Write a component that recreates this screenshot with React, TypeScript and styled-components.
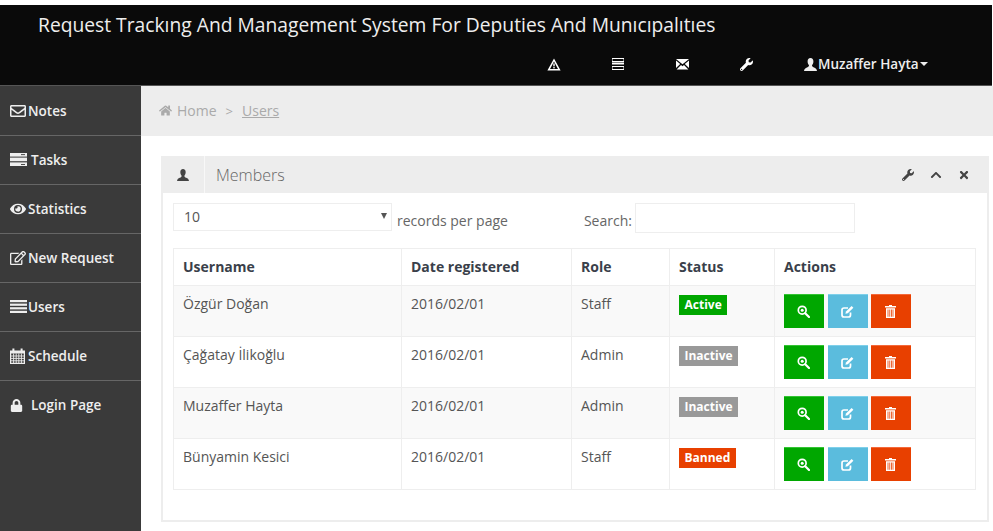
import React from "react";
import styled, { createGlobalStyle } from "styled-components";
import { FaChevronUp, FaEye, FaHome, FaLock, FaRegEdit, FaRegEnvelope, FaTimes, FaWrench } from "react-icons/fa";

const GlobalStyle = createGlobalStyle`
  html, body {
    margin: 0;
    padding: 0;
    background: #fff;
  }
  body {
    font-family: "Open Sans", "Liberation Sans", sans-serif;
    font-size: 14px;
    color: #555;
  }
`;

const Page = styled.div`
  width: 993px;
  height: 531px;
  padding-top: 5px;
  box-sizing: border-box;
  overflow: hidden;
`;

const Header = styled.header`
  width: 992px;
  height: 81px;
  box-sizing: border-box;
  background: #0a0a0a;
  border-bottom: 1px solid #555;
  color: #eee;
`;

const Title = styled.h1`
  margin: 0;
  padding: 6px 0 0 38px;
  font-size: 19.25px;
  font-weight: 400;
  line-height: 27px;
  color: #eee;
`;

const TopNav = styled.nav`
  display: flex;
  align-items: center;
  height: 20px;
  margin-top: 16px;
  padding-left: 522px;
`;

const TopNavIcon = styled.span`
  display: flex;
  justify-content: center;
  width: 64px;
  color: #fff;
  font-size: 13px;
`;

const UserMenu = styled.span`
  display: flex;
  align-items: center;
  margin-left: 26px;
  color: #eee;
  font-size: 13.5px;
  font-weight: 600;
  gap: 1px;
`;

const Caret = styled.i`
  width: 0;
  height: 0;
  border-left: 4px solid transparent;
  border-right: 4px solid transparent;
  border-top: 4px solid #eee;
`;

const Shell = styled.div`
  display: grid;
  grid-template-columns: 141px 1fr;
  height: 445px;
`;

const Sidebar = styled.aside`
  background: #3a3a3a;
`;

const SideItem = styled.a`
  display: flex;
  align-items: center;
  height: 49px;
  padding: 0 0 1px 10px;
  box-sizing: border-box;
  border-bottom: 1px solid #666;
  color: #eee;
  font-size: 13.5px;
  font-weight: 600;

  &:first-child {
    height: 50px;
    padding-bottom: 0;
  }

  &:last-child {
    padding-bottom: 1px;
    border-bottom: 0;
  }
`;

const SideIcon = styled.span<{ $wide?: boolean }>`
  display: flex;
  width: ${(p) => (p.$wide ? "21px" : "18px")};
  font-size: 16px;
  color: #eee;
`;

const Content = styled.main`
  min-width: 0;
`;

const Breadcrumb = styled.div`
  display: flex;
  align-items: center;
  height: 50px;
  padding: 0 0 1px 18px;
  box-sizing: border-box;
  background: #ededed;
  color: #aaa;
  font-size: 14px;
`;

const Crumb = styled.span`
  margin-left: 5px;
`;

const Separator = styled.span`
  margin: 0 9px;
  font-size: 13px;
`;

const CrumbLink = styled.a`
  color: #aaa;
  text-decoration: underline;
`;

const Panel = styled.section`
  width: 828px;
  height: 366px;
  margin: 20px 0 0 20px;
  box-sizing: border-box;
  border: 2px solid #ededed;
  border-top: 0;
`;

const PanelHead = styled.div`
  display: flex;
  align-items: center;
  height: 37px;
  margin: 0 -2px;
  background: #ededed;
`;

const PanelIcon = styled.span`
  display: flex;
  align-items: center;
  justify-content: center;
  width: 43px;
  height: 100%;
  border-right: 1px solid #f8f8f8;
  color: #444;
  font-size: 12px;
`;

const PanelTitle = styled.h2`
  margin: 0 0 0 11px;
  flex: 1;
  font-size: 16px;
  font-weight: 300;
  color: #666;
`;

const PanelTools = styled.div`
  display: flex;
  align-items: center;
  gap: 16px;
  padding-right: 19px;
  color: #444;
  font-size: 12px;
`;

const PanelBody = styled.div`
  padding: 10px 11px 0 10px;
`;

const Controls = styled.div`
  display: flex;
  align-items: flex-start;
  height: 45px;
`;

const SelectBox = styled.div`
  position: relative;
  width: 219px;
  height: 28px;
  padding-left: 10px;
  box-sizing: border-box;
  border: 1px solid #eee;
  line-height: 25px;
  color: #555;

  &::after {
    content: "";
    position: absolute;
    right: 4px;
    top: 9px;
    border-left: 3px solid transparent;
    border-right: 3px solid transparent;
    border-top: 6px solid #555;
  }
`;

const ControlLabel = styled.span<{ $gap: number }>`
  margin: 8px 0 0 ${(p) => p.$gap}px;
  line-height: 20px;
  color: #666;
`;

const SearchInput = styled.div`
  width: 220px;
  height: 30px;
  margin-left: 3px;
  box-sizing: border-box;
  border: 1px solid #eee;
`;

const Table = styled.table`
  width: 802px;
  table-layout: fixed;
  border-collapse: collapse;
  border: 1px solid #eee;
  font-size: 14px;
`;

const Th = styled.th<{ $width: number }>`
  width: ${(p) => p.$width}px;
  height: 37px;
  padding: 0 9px 2px;
  box-sizing: border-box;
  border: 1px solid #eee;
  text-align: left;
  font-weight: 700;
  color: #3a3f4a;
`;

const Row = styled.tr<{ $odd: boolean }>`
  background: ${(p) => (p.$odd ? "#f9f9f9" : "#fff")};
`;

const Td = styled.td`
  height: 51px;
  padding: 8px 9px 0;
  box-sizing: border-box;
  border: 1px solid #eee;
  vertical-align: top;
  line-height: 20px;
  color: #555;
`;

const ActionCell = styled(Td)`
  padding-top: 8px;
  white-space: nowrap;
`;

const statusColors = {
  Active: "#00a700",
  Inactive: "#999",
  Banned: "#e84000",
};

const Badge = styled.span<{ $status: keyof typeof statusColors }>`
  display: inline-block;
  height: 20px;
  margin-top: 1px;
  padding: 0 5.5px;
  background: ${(p) => statusColors[p.$status]};
  color: #fff;
  font-size: 12px;
  font-weight: 700;
  line-height: 19px;
  vertical-align: top;
`;

const ActionButton = styled.button<{ $color: string; $light: string; $gap: number }>`
  display: inline-flex;
  align-items: center;
  justify-content: center;
  width: 40px;
  height: 34px;
  margin: 0 ${(p) => p.$gap}px 0 0;
  padding: 0 2px 0 0;
  border: 0;
  border-top: 1px solid ${(p) => p.$light};
  background: ${(p) => p.$color};
  color: #fff;
  vertical-align: top;
`;

// old bootstrap style glyphs that the icon packs do not carry
const WarningIcon = () => (
  <svg width="14" height="13" viewBox="0 0 14 13">
    <path fillRule="evenodd" fill="currentColor" d="M7 0.5 13.6 12.5H0.4ZM7 3.6 3 11H11Z" />
    <rect x="6.3" y="5.4" width="1.4" height="3" fill="currentColor" />
    <rect x="6.3" y="9" width="1.4" height="1.4" fill="currentColor" />
  </svg>
);

const StackIcon = () => (
  <svg width="12" height="12" viewBox="0 0 12 12">
    <rect y="0.5" width="12" height="3" fill="none" stroke="currentColor" />
    <rect y="4.5" width="12" height="2" fill="currentColor" />
    <rect y="8.5" width="12" height="3" fill="none" stroke="currentColor" />
  </svg>
);

const MailCrossIcon = () => (
  <svg width="13" height="11" viewBox="0 0 13 11">
    <path
      fill="currentColor"
      d="M0 0H13L6.5 5.2ZM0 1.6 4.2 5 0 9ZM13 1.6 8.8 5 13 9ZM0.6 10.6 5 6.1 6.5 7.2 8 6.1 12.4 10.6Z"
    />
  </svg>
);

const UserIcon = ({ size = 13 }: { size?: number }) => (
  <svg width={size} height={size} viewBox="0 0 13 13">
    <path
      fill="currentColor"
      d="M6.5 0C8.4 0 9.4 1.4 9.4 3.4 9.4 5 8.7 6.4 8 7.2 8 8.4 8.6 8.9 10 9.5 11.6 10.2 12.6 10.8 13 13H0C.4 10.8 1.4 10.2 3 9.5 4.4 8.9 5 8.4 5 7.2 4.3 6.4 3.6 5 3.6 3.4 3.6 1.4 4.6 0 6.5 0Z"
    />
  </svg>
);

const TasksIcon = () => (
  <svg width="17" height="13" viewBox="0 0 17 13">
    <rect width="17" height="3.6" fill="currentColor" />
    <rect y="4.6" width="17" height="3.6" fill="currentColor" />
    <rect y="9.4" width="17" height="3.6" fill="currentColor" />
    <rect x="11" y="11" width="4" height="0.9" fill="#3a3a3a" />
    <rect x="11" y="1.2" width="4" height="0.9" fill="#3a3a3a" />
  </svg>
);

const ListIcon = () => (
  <svg width="17" height="13" viewBox="0 0 17 13">
    <rect width="17" height="2.2" fill="currentColor" />
    <rect y="3.6" width="17" height="2.2" fill="currentColor" />
    <rect y="7.2" width="17" height="2.2" fill="currentColor" />
    <rect y="10.8" width="17" height="2.2" fill="currentColor" />
  </svg>
);

const CalendarIcon = () => (
  <svg width="15" height="16" viewBox="0 0 15 16">
    <path
      fillRule="evenodd"
      fill="currentColor"
      d="M0 2.5H2.4V0.5H4.4V2.5H10.6V0.5H12.6V2.5H15V16H0ZM1.2 5.5V14.8H13.8V5.5Z"
    />
    <path
      stroke="currentColor"
      strokeWidth="0.9"
      d="M1 8H14M1 10.4H14M1 12.8H14M3.6 5.5V15M6.2 5.5V15M8.8 5.5V15M11.4 5.5V15"
    />
  </svg>
);

const ZoomIcon = () => (
  <svg width="13" height="13" viewBox="0 0 13 13">
    <circle cx="5.2" cy="5.2" r="3.9" fill="none" stroke="currentColor" strokeWidth="1.7" />
    <circle cx="5.2" cy="5.2" r="1.5" fill="currentColor" />
    <path d="M8.2 8.2 12 12" stroke="currentColor" strokeWidth="2.2" strokeLinecap="round" />
  </svg>
);

const CheckEditIcon = () => (
  <svg width="13" height="13" viewBox="0 0 13 13">
    <path
      d="M9.5 7.5V10A2 2 0 0 1 7.5 12H3A2 2 0 0 1 1 10V5A2 2 0 0 1 3 3H7"
      fill="none"
      stroke="currentColor"
      strokeWidth="1.7"
    />
    <path d="M4.4 8.8 5 6.4 10.6 1 12.4 2.8 6.8 8.2Z" fill="currentColor" />
  </svg>
);

const TrashIcon = () => (
  <svg width="11" height="13" viewBox="0 0 11 13">
    <path fill="currentColor" d="M4 0H7V1H11V2.4H0V1H4Z" />
    <path
      fill="currentColor"
      d="M1 3.2H10V13H1ZM2.6 4.4V11.8H3.4V4.4ZM4.4 4.4V11.8H5.2V4.4ZM6 4.4V11.8H6.8V4.4ZM7.6 4.4V11.8H8.4V4.4Z"
      fillRule="evenodd"
    />
  </svg>
);

const menu = [
  { label: "Notes", icon: <FaRegEnvelope /> },
  { label: "Tasks", icon: <TasksIcon />, wide: true },
  { label: "Statistics", icon: <FaEye /> },
  { label: "New Request", icon: <FaRegEdit /> },
  { label: "Users", icon: <ListIcon /> },
  { label: "Schedule", icon: <CalendarIcon /> },
  { label: "Login Page", icon: <FaLock size={13} />, wide: true },
];

const users: { name: string; role: string; status: keyof typeof statusColors }[] = [
  { name: "Özgür Doğan", role: "Staff", status: "Active" },
  { name: "Çağatay İlikoğlu", role: "Admin", status: "Inactive" },
  { name: "Muzaffer Hayta", role: "Admin", status: "Inactive" },
  { name: "Bünyamin Kesici", role: "Staff", status: "Banned" },
];

const App: React.FC = () => {
  return (
    <Page>
      <GlobalStyle />
      <Header>
        <Title>Request Trackıng And Management System For Deputies And Munıcıpalıtıes</Title>
        <TopNav>
          <TopNavIcon>
            <WarningIcon />
          </TopNavIcon>
          <TopNavIcon>
            <StackIcon />
          </TopNavIcon>
          <TopNavIcon>
            <MailCrossIcon />
          </TopNavIcon>
          <TopNavIcon>
            <FaWrench />
          </TopNavIcon>
          <UserMenu>
            <UserIcon />
            Muzaffer Hayta
            <Caret />
          </UserMenu>
        </TopNav>
      </Header>
      <Shell>
        <Sidebar>
          {menu.map((item) => (
            <SideItem key={item.label}>
              <SideIcon $wide={item.wide}>{item.icon}</SideIcon>
              {item.label}
            </SideItem>
          ))}
        </Sidebar>
        <Content>
          <Breadcrumb>
            <FaHome size={13} />
            <Crumb>Home</Crumb>
            <Separator>&gt;</Separator>
            <CrumbLink>Users</CrumbLink>
          </Breadcrumb>
          <Panel>
            <PanelHead>
              <PanelIcon>
                <UserIcon size={12} />
              </PanelIcon>
              <PanelTitle>Members</PanelTitle>
              <PanelTools>
                <FaWrench />
                <FaChevronUp />
                <FaTimes />
              </PanelTools>
            </PanelHead>
            <PanelBody>
              <Controls>
                <SelectBox>10</SelectBox>
                <ControlLabel $gap={5}>records per page</ControlLabel>
                <ControlLabel $gap={76}>Search:</ControlLabel>
                <SearchInput />
              </Controls>
              <Table>
                <thead>
                  <tr>
                    <Th $width={228}>Username</Th>
                    <Th $width={170}>Date registered</Th>
                    <Th $width={98}>Role</Th>
                    <Th $width={105}>Status</Th>
                    <Th $width={201}>Actions</Th>
                  </tr>
                </thead>
                <tbody>
                  {users.map((user, index) => (
                    <Row key={user.name} $odd={index % 2 === 0}>
                      <Td>{user.name}</Td>
                      <Td>2016/02/01</Td>
                      <Td>{user.role}</Td>
                      <Td>
                        <Badge $status={user.status}>{user.status}</Badge>
                      </Td>
                      <ActionCell>
                        <ActionButton $color="#00a700" $light="#33c433" $gap={4}>
                          <ZoomIcon />
                        </ActionButton>
                        <ActionButton $color="#5bbcdd" $light="#7fd0ea" $gap={3}>
                          <CheckEditIcon />
                        </ActionButton>
                        <ActionButton $color="#e84000" $light="#f4693a" $gap={0}>
                          <TrashIcon />
                        </ActionButton>
                      </ActionCell>
                    </Row>
                  ))}
                </tbody>
              </Table>
            </PanelBody>
          </Panel>
        </Content>
      </Shell>
    </Page>
  );
};

export default App;
